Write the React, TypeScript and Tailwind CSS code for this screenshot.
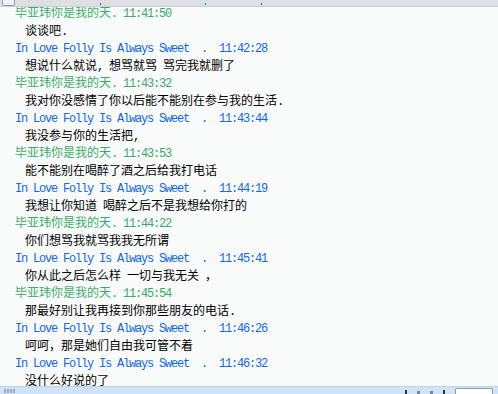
import React from "react";

type Entry = { who: "bi" | "love"; time: string; text: string };

const entries: Entry[] = [
  { who: "bi", time: "11:41:50", text: "谈谈吧." },
  { who: "love", time: "11:42:28", text: "想说什么就说, 想骂就骂 骂完我就删了" },
  { who: "bi", time: "11:43:32", text: "我对你没感情了你以后能不能别在参与我的生活." },
  { who: "love", time: "11:43:44", text: "我没参与你的生活把," },
  { who: "bi", time: "11:43:53", text: "能不能别在喝醉了酒之后给我打电话" },
  { who: "love", time: "11:44:19", text: "我想让你知道 喝醉之后不是我想给你打的" },
  { who: "bi", time: "11:44:22", text: "你们想骂我就骂我我无所谓" },
  { who: "love", time: "11:45:41", text: "你从此之后怎么样 一切与我无关 ，" },
  { who: "bi", time: "11:45:54", text: "那最好别让我再接到你那些朋友的电话." },
  { who: "love", time: "11:46:26", text: "呵呵，那是她们自由我可管不着" },
  { who: "love", time: "11:46:32", text: "没什么好说的了" },
];

// ascii runs go in a 6px-wide mono face, like the bitmap half-width glyphs
function Mixed({ text }: { text: string }) {
  const parts = text.split(/([\x00-\x7f]+)/).filter((p) => p.length > 0);
  return (
    <>
      {parts.map((p, i) =>
        /^[\x00-\x7f]+$/.test(p) ? (
          <span
            key={i}
            className="font-['Liberation_Mono',monospace] text-[12px] tracking-[-1.2px] whitespace-pre font-medium"
          >
            {p}
          </span>
        ) : (
          <span key={i} className="font-['Noto_Sans_CJK_SC',sans-serif] text-[12px]">
            {p}
          </span>
        )
      )}
    </>
  );
}

function Header({ entry }: { entry: Entry }) {
  if (entry.who === "bi") {
    return (
      <div className="h-[17px] leading-[17px] text-[#3aab66] whitespace-pre">
        <Mixed text={`毕亚玮你是我的天. ${entry.time}`} />
      </div>
    );
  }
  return (
    <div className="h-[17px] leading-[17px] text-[#1066f0] whitespace-pre">
      <Mixed text={`In Love Folly Is Always Sweet  .  ${entry.time}`} />
    </div>
  );
}

export default function App() {
  return (
    <div className="w-[498px] h-[394px] flex flex-col bg-[#f9fbfb] overflow-hidden">
      {/* toolbar, mostly scrolled off */}
      <div className="h-[7px] shrink-0 bg-[#dedfe3] border-b border-[#cfd0d4] flex items-end relative">
        <div className="ml-[2px] w-[13px] h-[6px] border border-[#8d9bb3] border-t-0 rounded-b-[2px] bg-[#eef1f7]" />
        <div className="absolute left-[100px] bottom-[1px] w-[1px] h-[2px] bg-[#555]" />
        <div className="absolute left-[205px] bottom-[1px] w-[1px] h-[2px] bg-[#2a72d8]" />
        <div className="absolute left-[261px] bottom-[1px] w-[1px] h-[2px] bg-[#555]" />
      </div>

      {/* chat log */}
      <div className="flex-1 overflow-hidden">
        <div className="-mt-[4px] pl-[15px]">
          {entries.map((e, i) => (
            <div key={i}>
              <Header entry={e} />
              <div className="h-[18px] leading-[18px] pl-[10px] text-black whitespace-pre">
                <Mixed text={e.text} />
              </div>
            </div>
          ))}
        </div>
      </div>

      {/* input bar */}
      <div className="h-[8px] shrink-0 bg-[#cfe4f8] border-t border-[#bcd3ea] flex items-end">
        <div className="ml-[4px] mb-[1px] w-[16px] h-[4px] flex gap-[1px]">
          <div className="w-[2px] h-[4px] bg-[#9aa8bb]" />
          <div className="w-[2px] h-[4px] bg-[#9aa8bb]" />
          <div className="w-[2px] h-[4px] bg-[#9aa8bb]" />
          <div className="w-[2px] h-[4px] bg-[#9aa8bb]" />
        </div>
        <div className="flex-1" />
        <div className="flex gap-[10px] mr-[10px] items-end">
          <div className="w-[2px] h-[4px] bg-[#333]" />
          <div className="w-[3px] h-[3px] bg-[#7b8796]" />
          <div className="w-[3px] h-[3px] bg-[#7b8796]" />
          <div className="w-[2px] h-[4px] bg-[#333]" />
        </div>
        <div className="w-[38px] h-[6px] mr-[5px] bg-white border border-b-0 border-[#8e9aa8] rounded-t-[2px]" />
      </div>
    </div>
  );
}
